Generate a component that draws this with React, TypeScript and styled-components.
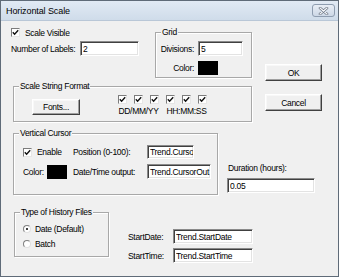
import React from 'react'
import styled, { createGlobalStyle } from 'styled-components'

const GlobalStyle = createGlobalStyle`
  * { box-sizing: border-box; }
  html, body { margin: 0; padding: 0; background: #f0f0f0; }
  body {
    font-family: "Liberation Sans", Arial, sans-serif;
    font-size: 8.5px;
    letter-spacing: -0.3px;
    color: #000;
  }
`

const Window = styled.div`
  width: 339px;
  height: 277px;
  border: 1px solid #5f6b78;
  background: #f0f0f0;
  display: flex;
  flex-direction: column;
  overflow: hidden;
`

const TitleBar = styled.div`
  height: 20px;
  flex: none;
  display: flex;
  align-items: center;
  justify-content: space-between;
  padding: 0 3px 0 5px;
  background: linear-gradient(#e1eaf4, #cfdcea);
  border-bottom: 1px solid #b9c7d7;
  font-size: 9px;
  letter-spacing: -0.1px;
`

const CloseButton = styled.div`
  width: 23px;
  height: 13px;
  border: 1px solid #8e9db0;
  border-radius: 3px;
  background: linear-gradient(#e8eef6, #cdd8e6);
  display: flex;
  align-items: center;
  justify-content: center;
`

const Body = styled.div`
  flex: 1;
  display: flex;
  flex-direction: column;
`

const TopSection = styled.div`
  display: flex;
  margin-top: 7px;
`

const LeftStack = styled.div`
  display: flex;
  flex-direction: column;
  margin-left: 10px;
  width: 241px;
`

const OptionsRow = styled.div`
  display: flex;
  align-items: flex-start;
  height: 50px;
`

const MainOptions = styled.div`
  width: 128px;
  display: flex;
  flex-direction: column;
`

const CheckRow = styled.label`
  display: flex;
  align-items: center;
  gap: 5px;
  height: 9px;
  white-space: nowrap;
`

const FieldRow = styled.div`
  display: flex;
  align-items: center;
  margin-top: 4px;
`

const FieldLabel = styled.span<{ $w: number }>`
  width: ${p => p.$w}px;
  flex: none;
  white-space: nowrap;
`

const Group = styled.div<{ $w: number; $h: number }>`
  position: relative;
  flex: none;
  width: ${p => p.$w}px;
  height: ${p => p.$h}px;
  border: 1px solid #a8a8a8;
  box-shadow: inset 1px 1px 0 #fff, 1px 1px 0 #fff;
`

const GroupTitle = styled.span`
  position: absolute;
  top: -6px;
  left: 5px;
  padding: 0 1px;
  line-height: 11px;
  background: #f0f0f0;
  white-space: nowrap;
`

const GridGroup = styled(Group)`
  margin: 4px 0 0 16px;
`

const GridBody = styled.div`
  display: grid;
  grid-template-columns: 38px auto;
  column-gap: 4px;
  row-gap: 5px;
  align-items: center;
  padding-top: 8px;
`

const RightLabel = styled.span`
  justify-self: end;
  white-space: nowrap;
`

const Swatch = styled.div`
  width: 20px;
  height: 14px;
  background: #000;
  flex: none;
`

const TextBox = styled.input<{ $w: number; $h?: number }>`
  width: ${p => p.$w}px;
  height: ${p => p.$h ?? 15}px;
  flex: none;
  margin: 0;
  padding: 0 0 0 2px;
  background: #fff;
  border: 1px solid;
  border-color: #8a8a8a #fff #fff #8a8a8a;
  box-shadow: inset 1px 1px 0 #404040, inset -1px -1px 0 #e3e3e3;
  font: inherit;
  letter-spacing: inherit;
  color: #000;
  outline: none;
`

const StringGroup = styled(Group)`
  margin: 8px 0 0 2px;
`

const StringBody = styled.div`
  display: flex;
  align-items: flex-start;
  padding-left: 18px;
`

const PushButton = styled.button<{ $w: number; $h?: number }>`
  width: ${p => p.$w}px;
  height: ${p => p.$h ?? 17}px;
  flex: none;
  padding: 0;
  background: #f0f0f0;
  border: 1px solid;
  border-color: #fff #404040 #404040 #fff;
  box-shadow: inset -1px -1px 0 #a0a0a0, inset 1px 1px 0 #f8f8f8;
  font: inherit;
  letter-spacing: inherit;
  color: #000;
`

const FontsButton = styled(PushButton)`
  margin-top: 12px;
`

const FormatGrid = styled.div`
  display: grid;
  grid-template-columns: repeat(6, 9px);
  column-gap: 7px;
  row-gap: 2px;
  margin: 8px 0 0 38px;
`

const FormatLabel = styled.span`
  grid-column: span 3;
  display: flex;
  justify-content: center;
  white-space: nowrap;
  line-height: 10px;
`

const Box = styled.span`
  width: 9px;
  height: 9px;
  flex: none;
  background: #fff;
  border: 1px solid;
  border-color: #7c7c7c #e6e6e6 #e6e6e6 #7c7c7c;
  display: inline-flex;
  align-items: center;
  justify-content: center;
`

const ButtonColumn = styled.div`
  display: flex;
  flex-direction: column;
  margin-left: 13px;
`

const OkButton = styled(PushButton)`
  margin-top: 36px;
`

const CancelButton = styled(PushButton)`
  margin-top: 13px;
`

const CursorRow = styled.div`
  display: flex;
  margin-top: 11px;
`

const CursorGroup = styled(Group)`
  margin-left: 12px;
`

const CursorGrid = styled.div`
  display: grid;
  grid-template-columns: 50px 74px auto;
  grid-template-rows: 14px 17px;
  row-gap: 4px;
  align-items: center;
  padding: 11px 0 0 9px;
`

const Cell = styled.div`
  display: flex;
  align-items: center;
  gap: 5px;
  white-space: nowrap;
`

const DurationBlock = styled.div`
  display: flex;
  flex-direction: column;
  margin: 30px 0 0 9px;

  > span {
    line-height: 10px;
    padding-left: 1px;
    margin-bottom: 5px;
  }
`

const HistoryRow = styled.div`
  display: flex;
  margin-top: 17px;
`

const HistoryGroup = styled(Group)`
  margin-left: 13px;
`

const RadioList = styled.div`
  display: flex;
  flex-direction: column;
  gap: 7px;
  padding: 12px 0 0 8px;
`

const RadioRow = styled.label`
  display: flex;
  align-items: center;
  gap: 4px;
  height: 8px;
  white-space: nowrap;
`

const RadioDot = styled.span<{ $on?: boolean }>`
  width: 8px;
  height: 8px;
  flex: none;
  border-radius: 50%;
  background: #fff;
  border: 1px solid;
  border-color: #808080 #e0e0e0 #e0e0e0 #808080;
  display: inline-flex;
  align-items: center;
  justify-content: center;

  &::after {
    content: '';
    width: 2px;
    height: 2px;
    border-radius: 50%;
    background: ${p => (p.$on ? '#000' : 'transparent')};
  }
`

const StartFields = styled.div`
  display: grid;
  grid-template-columns: 45px 80px;
  grid-template-rows: 15px 15px;
  row-gap: 4px;
  align-items: center;
  margin: 17px 0 0 19px;
  white-space: nowrap;
`

function Check() {
  return (
    <Box>
      <svg width="7" height="7" viewBox="0 0 7 7">
        <path d="M0.8 3.2 L2.6 5.2 L6.2 1.2" fill="none" stroke="#111" strokeWidth="1.4" />
      </svg>
    </Box>
  )
}

export default function App() {
  return (
    <>
      <GlobalStyle />
      <Window>
        <TitleBar>
          <span>Horizontal Scale</span>
          <CloseButton>
            <svg width="11" height="8" viewBox="0 0 11 8">
              <path d="M2 1 L9 7 M9 1 L2 7" stroke="#6b7583" strokeWidth="2.6" strokeLinecap="round" />
              <path d="M2 1 L9 7 M9 1 L2 7" stroke="#f4f6f9" strokeWidth="1.2" strokeLinecap="round" />
            </svg>
          </CloseButton>
        </TitleBar>
        <Body>
          <TopSection>
            <LeftStack>
              <OptionsRow>
                <MainOptions>
                  <CheckRow>
                    <Check />
                    <span>Scale Visible</span>
                  </CheckRow>
                  <FieldRow>
                    <FieldLabel $w={69}>Number of Labels:</FieldLabel>
                    <TextBox $w={59} readOnly value="2" />
                  </FieldRow>
                </MainOptions>
                <GridGroup $w={97} $h={46}>
                  <GroupTitle>Grid</GroupTitle>
                  <GridBody>
                    <RightLabel>Divisions:</RightLabel>
                    <TextBox $w={45} readOnly value="5" />
                    <RightLabel>Color:</RightLabel>
                    <Swatch />
                  </GridBody>
                </GridGroup>
              </OptionsRow>
              <StringGroup $w={239} $h={36}>
                <GroupTitle>Scale String Format</GroupTitle>
                <StringBody>
                  <FontsButton $w={48} $h={16}>Fonts...</FontsButton>
                  <FormatGrid>
                    {[0, 1, 2, 3, 4, 5].map(i => (
                      <Check key={i} />
                    ))}
                    <FormatLabel>DD/MM/YY</FormatLabel>
                    <FormatLabel>HH:MM:SS</FormatLabel>
                  </FormatGrid>
                </StringBody>
              </StringGroup>
            </LeftStack>
            <ButtonColumn>
              <OkButton $w={57}>OK</OkButton>
              <CancelButton $w={57}>Cancel</CancelButton>
            </ButtonColumn>
          </TopSection>

          <CursorRow>
            <CursorGroup $w={205} $h={62}>
              <GroupTitle>Vertical Cursor</GroupTitle>
              <CursorGrid>
                <Cell>
                  <Check />
                  <span>Enable</span>
                </Cell>
                <Cell>Position (0-100):</Cell>
                <TextBox $w={47} $h={14} readOnly value="Trend.CursorPos" />
                <Cell>
                  <FieldLabel $w={19}>Color:</FieldLabel>
                  <Swatch />
                </Cell>
                <Cell>Date/Time output:</Cell>
                <TextBox $w={64} readOnly value="Trend.CursorOut" />
              </CursorGrid>
            </CursorGroup>
            <DurationBlock>
              <span>Duration (hours):</span>
              <TextBox $w={88} readOnly value="0.05" />
            </DurationBlock>
          </CursorRow>

          <HistoryRow>
            <HistoryGroup $w={95} $h={45}>
              <GroupTitle>Type of History Files</GroupTitle>
              <RadioList>
                <RadioRow>
                  <RadioDot $on />
                  <span>Date (Default)</span>
                </RadioRow>
                <RadioRow>
                  <RadioDot />
                  <span>Batch</span>
                </RadioRow>
              </RadioList>
            </HistoryGroup>
            <StartFields>
              <span>StartDate:</span>
              <TextBox $w={80} readOnly value="Trend.StartDate" />
              <span>StartTime:</span>
              <TextBox $w={80} readOnly value="Trend.StartTime" />
            </StartFields>
          </HistoryRow>
        </Body>
      </Window>
    </>
  )
}
